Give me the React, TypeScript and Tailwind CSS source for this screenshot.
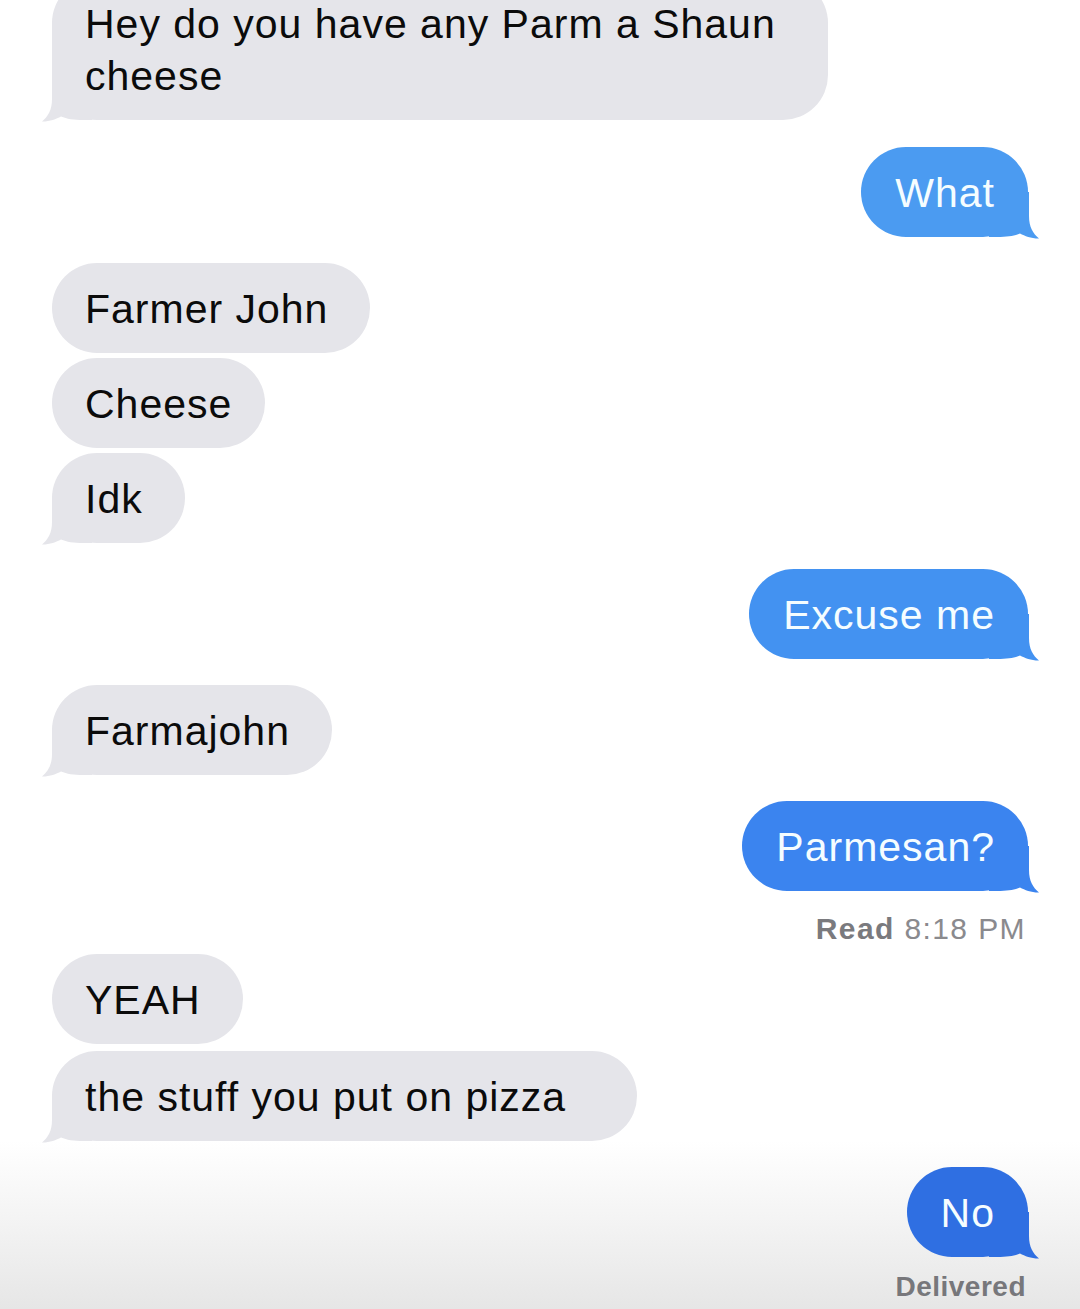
import clsx from "clsx"

type TailProps = {
    side: "left" | "right"
    color: string
}

// iMessage style hook under the last bubble of a group
const Tail = ({ side, color }: TailProps) => {
    const d = "M10 0 L10 24 C10 35 6 41.5 0 46.5 C8 46.6 14 44 19 41.5 C25 44 31 45 42 45 L50 45 L50 0 Z"
    return (
        <svg
            viewBox="0 0 50 47"
            className={clsx(
                "absolute bottom-[-2px] w-[50px] h-[47px] pointer-events-none",
                side === "left" ? "left-[-10px]" : "right-[-11px]"
            )}
        >
            {side === "left" ? (
                <path d={d} fill={color} />
            ) : (
                <g transform="translate(50,0) scale(-1,1)">
                    <path d={d} fill={color} />
                </g>
            )}
        </svg>
    )
}

type BubbleProps = {
    children: React.ReactNode
    me?: boolean
    tail?: boolean
    color?: string
    className?: string
}

const GRAY = "#e5e5ea"

const Bubble = ({ children, me = false, tail = false, color = GRAY, className }: BubbleProps) => {
    return (
        <div
            className={clsx(
                "relative rounded-[45px] pt-[20px] pb-[18px] text-[41px] leading-[52px] tracking-[1px] whitespace-nowrap",
                me ? "text-[#f5fdff] pl-[34px] pr-[33px]" : "text-[#0b0b0b] pl-[33px] pr-[42px]",
                className
            )}
            style={{ backgroundColor: color }}
        >
            {tail && <Tail side={me ? "right" : "left"} color={color} />}
            <span className="relative">{children}</span>
        </div>
    )
}

export default function App() {
    return (
        <div
            className="w-full h-[1309px] flex flex-col overflow-hidden bg-white"
            style={{ fontFamily: '"Liberation Sans", Arial, Helvetica, sans-serif' }}
        >
            <div className="pt-[4px]">
                <div className="px-[52px] [clip-path:inset(0_-60px_-60px_-60px)]">
                    <Bubble tail className="-mt-[26px] w-[776px]">
                        Hey do you have any Parm a Shaun
                        <br />
                        cheese
                    </Bubble>
                </div>
            </div>

            <div className="flex flex-col px-[52px]">
                <div className="flex justify-end mt-[27px]">
                    <Bubble me tail color="#4b9bf1">What</Bubble>
                </div>

                <div className="flex flex-col items-start mt-[26px] gap-[5px]">
                    <Bubble>Farmer John</Bubble>
                    <Bubble className="w-[213px]">Cheese</Bubble>
                    <Bubble tail>Idk</Bubble>
                </div>

                <div className="flex justify-end mt-[26px]">
                    <Bubble me tail color="#4392f1">Excuse me</Bubble>
                </div>

                <div className="flex items-start mt-[26px]">
                    <Bubble tail>Farmajohn</Bubble>
                </div>

                <div className="flex flex-col items-end mt-[26px]">
                    <Bubble me tail color="#3b84ef">Parmesan?</Bubble>
                    <p className="mt-[21px] mr-[2px] text-[30px] leading-[34px] text-[#8a8a8e] tracking-[1.4px]">
                        <span className="font-bold text-[#7a7a7e]">Read</span> 8:18 PM
                    </p>
                </div>

                <div className="flex flex-col items-start mt-[8px] gap-[7px]">
                    <Bubble>YEAH</Bubble>
                    <Bubble tail className="w-[585px]">the stuff you put on pizza</Bubble>
                </div>
            </div>

            <div className="flex-1 flex flex-col items-end px-[52px] pt-[26px] bg-gradient-to-b from-white via-[#f3f3f3] to-[#e6e6e6]">
                <Bubble me tail color="#2f6fe2">No</Bubble>
                <p className="mt-[13px] mr-[2px] text-[28px] leading-[34px] font-bold text-[#77777b] tracking-[0.5px]">
                    Delivered
                </p>
            </div>
        </div>
    )
}
